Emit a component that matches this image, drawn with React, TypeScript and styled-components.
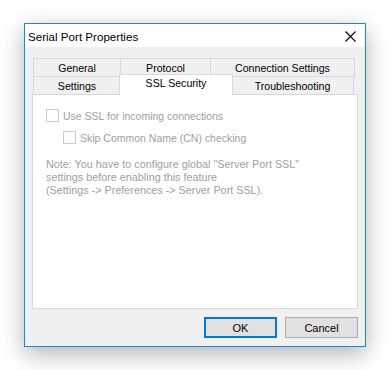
import React from 'react';
import styled, {createGlobalStyle} from "styled-components";

const GlobalStyle = createGlobalStyle`
  body {
    margin: 0;
    background: #ffffff;
    font-family: "Liberation Sans", Arial, sans-serif;
  }
`

type TabType = {
    label: string;
    width: number;
    selected?: boolean;
}

const topRow: TabType[] = [
    {label: 'General', width: 88},
    {label: 'Protocol', width: 91},
    {label: 'Connection Settings', width: 145},
]

const bottomRow: TabType[] = [
    {label: 'Settings', width: 88},
    {label: 'SSL Security', width: 114, selected: true},
    {label: 'Troubleshooting', width: 123},
]

const CloseIcon = () => (
    <svg width="11" height="11" viewBox="0 0 11 11">
        <path d="M0.5 0.5 L10.5 10.5 M10.5 0.5 L0.5 10.5" stroke="#000" strokeWidth="1.1"/>
    </svg>
)

type CheckProps = {
    label: string;
    indent?: number;
}

const Check = (props: CheckProps) => (
    <CheckRow indent={props.indent ?? 0}>
        <Box/>
        <CheckLabel>{props.label}</CheckLabel>
    </CheckRow>
)

export default function App() {
    return (
        <Page>
            <GlobalStyle/>
            <Dialog>
                <TitleBar>
                    <Title>Serial Port Properties</Title>
                    <CloseButton><CloseIcon/></CloseButton>
                </TitleBar>
                <Body>
                    <Tabs>
                        <TabRow>
                            {topRow.map(t => <Tab key={t.label} w={t.width}>{t.label}</Tab>)}
                        </TabRow>
                        <TabRow>
                            {bottomRow.map(t => t.selected
                                ? <SelectedTab key={t.label} w={t.width}>{t.label}</SelectedTab>
                                : <Tab key={t.label} w={t.width}>{t.label}</Tab>)}
                        </TabRow>
                    </Tabs>
                    <Panel>
                        <Check label="Use SSL for incoming connections"/>
                        <Check label="Skip Common Name (CN) checking" indent={17}/>
                        <Note>
                            Note: You have to configure global "Server Port SSL"<br/>
                            settings before enabling this feature<br/>
                            (Settings -&gt; Preferences -&gt; Server Port SSL).
                        </Note>
                    </Panel>
                    <Buttons>
                        <Button primary>OK</Button>
                        <Button>Cancel</Button>
                    </Buttons>
                </Body>
            </Dialog>
        </Page>
    );
}

const Page = styled.div`
  padding: 23px 0 30px 24px;
`

const Dialog = styled.div`
  width: 342px;
  height: 324px;
  box-sizing: border-box;
  border: 1px solid #1c86d9;
  background: #f0f0f0;
  display: flex;
  flex-direction: column;
  box-shadow: 0 7px 22px rgba(0, 0, 0, 0.3);
`

const TitleBar = styled.div`
  height: 23px;
  background: #ffffff;
  display: flex;
  align-items: center;
  justify-content: space-between;
  padding-left: 3px;
  padding-right: 9px;
`

const Title = styled.span`
  font-size: 11.6px;
  color: #000;
  padding-top: 1px;
`

const CloseButton = styled.span`
  display: flex;
  padding-top: 2px;
`

const Body = styled.div`
  flex: 1;
  display: flex;
  flex-direction: column;
  padding: 11px 7px 8px 7px;
`

const Tabs = styled.div`
  display: flex;
  flex-direction: column;
  margin-left: 1px;
`

const TabRow = styled.div`
  display: flex;
  height: 18px;
`

const Tab = styled.div<{ w: number }>`
  width: ${p => p.w}px;
  box-sizing: border-box;
  height: 19px;
  margin-left: -1px;
  &:first-child { margin-left: 0; }
  border: 1px solid #d9d9d9;
  border-bottom: none;
  background: #f0f0f0;
  font-size: 10.6px;
  color: #000;
  display: flex;
  align-items: center;
  justify-content: center;
`

const SelectedTab = styled(Tab)`
  position: relative;
  z-index: 1;
  height: 21px;
  margin-top: -2px;
  margin-left: -2px;
  margin-right: -1px;
  background: #ffffff;
  align-items: flex-start;
  padding-top: 2px;
`

const Panel = styled.div`
  height: 215px;
  box-sizing: border-box;
  background: #ffffff;
  border: 1px solid #d9d9d9;
  padding: 14px 13px;
  display: flex;
  flex-direction: column;
`

const CheckRow = styled.div<{ indent: number }>`
  display: flex;
  align-items: center;
  height: 13px;
  margin-left: ${p => p.indent}px;
  margin-bottom: 9px;
`

const Box = styled.span`
  width: 13px;
  height: 13px;
  box-sizing: border-box;
  border: 1px solid #cccccc;
  background: #ffffff;
  flex-shrink: 0;
`

const CheckLabel = styled.span`
  margin-left: 4px;
  font-size: 10.5px;
  color: #a0a0a0;
`

const Note = styled.p`
  margin: 5px 0 0;
  font-size: 10.8px;
  line-height: 13px;
  color: #a0a0a0;
`

const Buttons = styled.div`
  display: flex;
  justify-content: flex-end;
  gap: 8px;
  margin-top: 8px;
`

const Button = styled.button<{ primary?: boolean }>`
  width: 73px;
  height: 21px;
  box-sizing: border-box;
  padding: 0;
  background: #e1e1e1;
  border: ${p => p.primary ? '2px solid #0078d7' : '1px solid #adadad'};
  font-family: "Liberation Sans", Arial, sans-serif;
  font-size: 11px;
  color: #000;
`
